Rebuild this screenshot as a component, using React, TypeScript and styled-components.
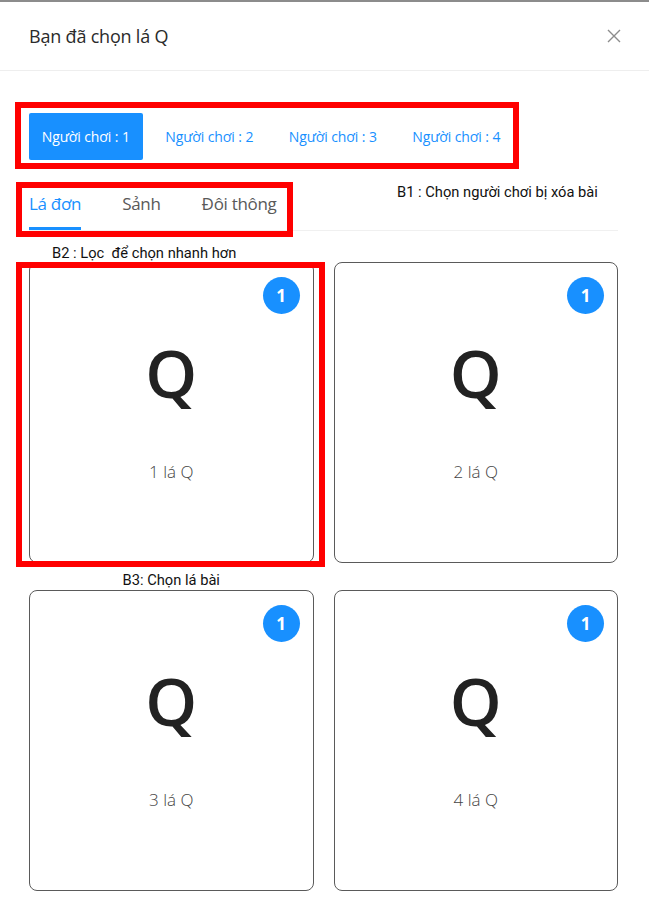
import React from "react";
import styled, { createGlobalStyle } from "styled-components";

const Global = createGlobalStyle`
  html, body { margin: 0; padding: 0; background: #fff; }
  body { font-family: "Open Sans", "Noto Sans", sans-serif; }
  * { box-sizing: border-box; }
`;

const Page = styled.div`
  width: 649px;
  min-height: 912px;
  background: #fff;
  border-top: 2px solid #8c8c8c;
`;

const Header = styled.div`
  height: 69px;
  padding: 0 27px 0 29px;
  display: flex;
  align-items: center;
  justify-content: space-between;
  border-bottom: 1px solid #eeeeee;
`;

const Title = styled.h2`
  margin: 0;
  font-size: 18px;
  font-weight: 400;
  color: #2b2b2b;
  letter-spacing: -0.2px;
`;

const CloseBtn = styled.button`
  border: 0;
  background: transparent;
  padding: 0;
  width: 16px;
  height: 16px;
  display: flex;
  align-items: center;
  justify-content: center;
  cursor: pointer;
`;

const Body = styled.div`
  padding: 31px 31px 0 29px;
`;

/* red annotation frame drawn around the player selector */
const PlayerFrame = styled.div`
  margin-left: -14px;
  width: 504px;
  border: 6px solid #ff0000;
  padding: 5px 0 3px 8px;
`;

const PlayerRow = styled.div`
  display: flex;
  gap: 10px;
`;

const PlayerBtn = styled.button<{ $active?: boolean }>`
  width: 114px;
  height: 47px;
  border: 0;
  border-radius: 2px;
  background: ${(p) => (p.$active ? "#1890ff" : "transparent")};
  color: ${(p) => (p.$active ? "#fff" : "#1890ff")};
  font-family: "Open Sans", sans-serif;
  font-size: 14px;
  letter-spacing: -0.1px;
  padding: 0;
  white-space: nowrap;
  cursor: pointer;
`;

const TabBar = styled.div`
  height: 62px;
  display: flex;
  align-items: flex-start;
  border-bottom: 1px solid #f0f0f0;
`;

/* red annotation frame drawn around the filter tabs */
const TabFrame = styled.div`
  margin: 13px 0 0 -13px;
  width: 277px;
  height: 55px;
  border: 6px solid #ff0000;
  padding-left: 7px;
  display: flex;
  gap: 41px;
  position: relative;
  z-index: 1;
`;

const Tab = styled.div<{ $active?: boolean }>`
  height: 42px;
  display: flex;
  align-items: center;
  padding-bottom: 9px;
  font-size: 17px;
  letter-spacing: -0.3px;
  white-space: nowrap;
  color: ${(p) => (p.$active ? "#1890ff" : "#595959")};
  border-bottom: 3px solid ${(p) => (p.$active ? "#1890ff" : "transparent")};
`;

const Note = styled.div`
  font-family: "Roboto", sans-serif;
  font-size: 14.7px;
  line-height: 18px;
  color: #111;
  white-space: pre;
`;

const StepOne = styled(Note)`
  margin: 14px 0 0 104px;
`;

const StepTwo = styled(Note)`
  height: 31px;
  padding: 13px 0 0 23px;
`;

const StepThree = styled(Note)`
  height: 27px;
  padding-top: 8px;
  text-align: center;
`;

const Grid = styled.div`
  display: grid;
  grid-template-columns: 1fr 1fr;
  column-gap: 20px;
`;

const Card = styled.div`
  position: relative;
  height: 301px;
  border: 1px solid #5a5a5a;
  border-radius: 8px;
  display: flex;
  flex-direction: column;
  align-items: center;
  padding-top: 76px;
`;

/* red annotation frame laid over the first card */
const CardFrame = styled.div`
  position: absolute;
  inset: -1px -12px -5px -14px;
  border: 6px solid #ff0000;
  pointer-events: none;
`;

const Badge = styled.span`
  position: absolute;
  top: 14px;
  right: 13px;
  width: 37px;
  height: 37px;
  border-radius: 50%;
  background: #1890ff;
  color: #fff;
  font-family: "Open Sans", sans-serif;
  font-weight: 700;
  font-size: 17px;
  display: flex;
  align-items: center;
  justify-content: center;
`;

const Rank = styled.div`
  font-size: 66px;
  font-weight: 600;
  line-height: 66px;
  color: #222;
`;

const Label = styled.div`
  margin-top: 55px;
  font-size: 17px;
  font-weight: 300;
  color: #444;
`;

const players = [1, 2, 3, 4];
const tabs = ["Lá đơn", "Sảnh", "Đôi thông"];

function QCard({ n, framed }: { n: number; framed?: boolean }) {
  return (
    <Card>
      {framed && <CardFrame />}
      <Badge>1</Badge>
      <Rank>Q</Rank>
      <Label>{n} lá Q</Label>
    </Card>
  );
}

export default function App() {
  return (
    <>
      <Global />
      <Page>
        <Header>
          <Title>Bạn đã chọn lá Q</Title>
          <CloseBtn aria-label="close">
            <svg width="14" height="14" viewBox="0 0 14 14">
              <path d="M1 1L13 13M13 1L1 13" stroke="#8c8c8c" strokeWidth="1.4" />
            </svg>
          </CloseBtn>
        </Header>
        <Body>
          <PlayerFrame>
            <PlayerRow>
              {players.map((n) => (
                <PlayerBtn key={n} $active={n === 1}>
                  Người chơi : {n}
                </PlayerBtn>
              ))}
            </PlayerRow>
          </PlayerFrame>
          <TabBar>
            <TabFrame>
              {tabs.map((t, i) => (
                <Tab key={t} $active={i === 0}>
                  {t}
                </Tab>
              ))}
            </TabFrame>
            <StepOne>B1 : Chọn người chơi bị xóa bài</StepOne>
          </TabBar>
          <StepTwo>B2 : Lọc  để chọn nhanh hơn</StepTwo>
          <Grid>
            <QCard n={1} framed />
            <QCard n={2} />
            <StepThree>B3: Chọn lá bài</StepThree>
            <div />
            <QCard n={3} />
            <QCard n={4} />
          </Grid>
        </Body>
      </Page>
    </>
  );
}
